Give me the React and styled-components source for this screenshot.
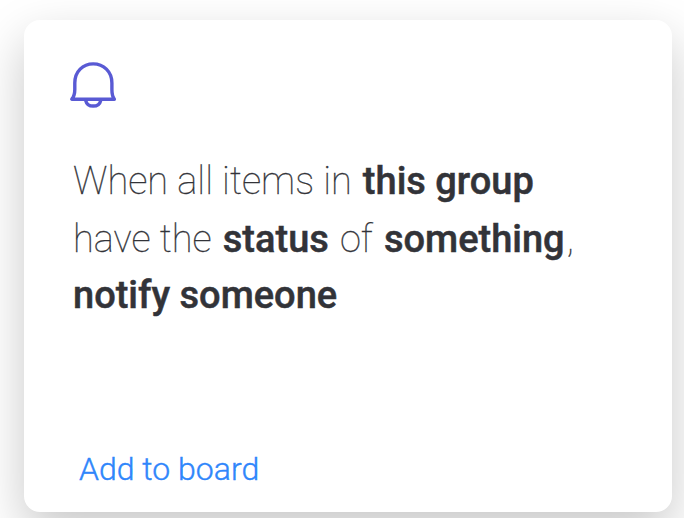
import React from 'react';
import styled, { createGlobalStyle } from 'styled-components';

const GlobalStyle = createGlobalStyle`
  * { box-sizing: border-box; }
  body { margin: 0; background: #fff; overflow: hidden; font-family: Roboto, sans-serif; }
`;
const Page = styled.main`
  height: 518px;
  padding: 20px 12px 6px 24px;
  overflow: hidden;
`;
const Card = styled.article`
  height: 492px;
  display: flex;
  flex-direction: column;
  align-items: flex-start;
  padding: 40px 48px 24px;
  border-radius: 16px;
  background: #fff;
  box-shadow: 0 20px 50px rgba(0, 0, 0, 0.22);
`;
const BellIcon = styled.svg`
  width: 48px;
  height: 48px;
  margin-left: -3px;
  fill: none;
  stroke: #595ad4;
  stroke-width: 3.4;
  stroke-linejoin: round;
  stroke-linecap: round;
`;
const Sentence = styled.p`
  margin: 45px 0 0 1px;
  font-size: 38px;
  font-weight: 100;
  color: #323338;
  -webkit-text-stroke: 0.3px #323338;
  white-space: nowrap;
`;
const Line = styled.span`
  display: block;
  line-height: ${({ $height = 57 }) => $height}px;
`;
const Term = styled.strong`
  margin: 0 2px 0 ${({ $lead = 0 }) => $lead}px;
  font-weight: 500;
  color: #323338;
  -webkit-text-stroke: 0.5px #323338;
`;
const AddLink = styled.a`
  margin: auto 0 0 7px;
  font-size: 32px;
  line-height: 38px;
  font-weight: 300;
  color: #2f86fb;
  -webkit-text-stroke: 0.4px #2f86fb;
`;

export default function App() {
  return (
    <Page>
      <GlobalStyle />
      <Card>
        <BellIcon viewBox="0 0 48 48" aria-hidden="true">
          <path d="M2.8 39.2h42.6c-1.6-2-2.5-5-2.5-9.7V23C42.9 11.500 34.500 3.900 24.200 3.900S5.800 11.500 5.800 23v6.500c0 4.700-1.300 7.700-3 9.700Z" />
          <path d="M16.800 40.800c1.600 7 13.200 7 14.800 0" />
        </BellIcon>
        <Sentence>
          <Line>When all items in <Term $lead={2}>this group</Term></Line>
          <Line $height={59}>have the <Term $lead={2}>status</Term> of <Term $lead={2}>something</Term>,</Line>
          <Line $height={53}><Term>notify someone</Term></Line>
        </Sentence>
        <AddLink>Add to board</AddLink>
      </Card>
    </Page>
  );
}
